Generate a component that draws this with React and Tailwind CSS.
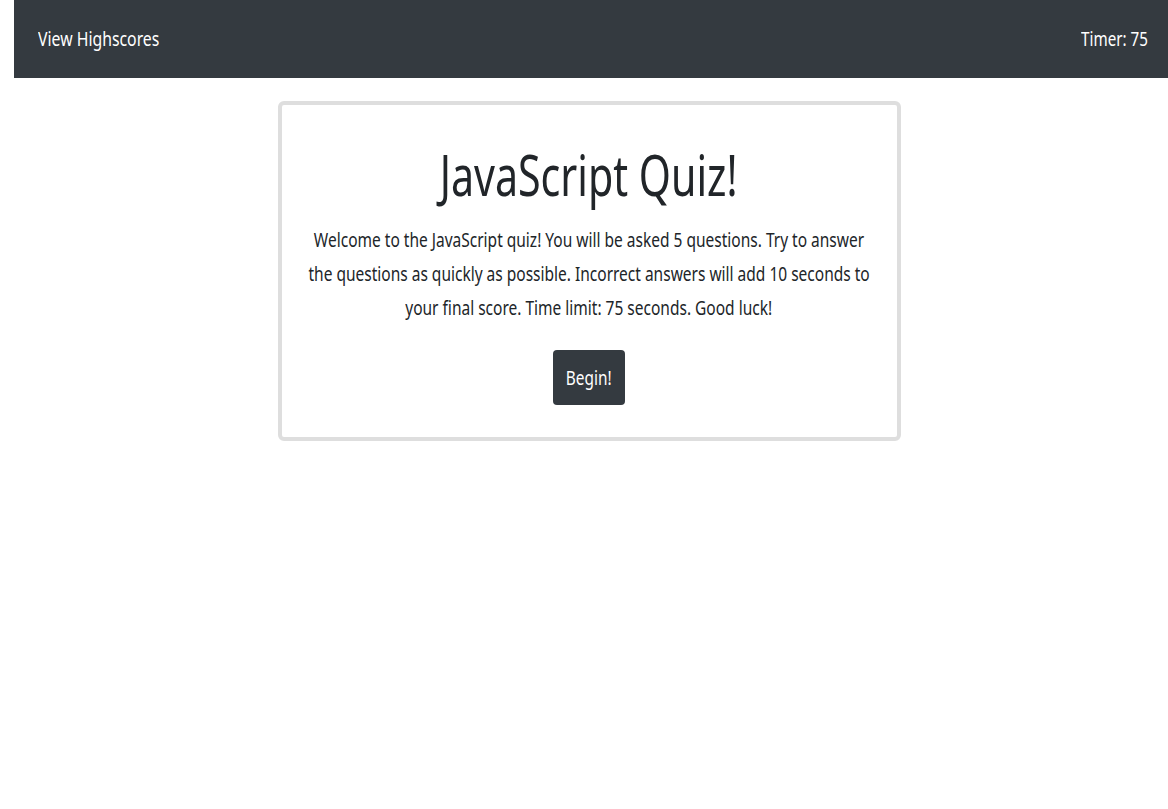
import React from "react";

// The screenshot's type is horizontally condensed; no condensed face is installed,
// so lines are squeezed with scale-x.
function Line({ children, className = "" }) {
  return <span className={`inline-block whitespace-nowrap ${className}`}>{children}</span>;
}

export default function App() {
  return (
    <div
      className="min-h-screen bg-white text-[#212529] pl-[14px]"
      style={{ fontFamily: '"Noto Sans", "Open Sans", sans-serif' }}
    >
      {/* Navbar */}
      <nav className="h-[78px] bg-[#343a40] flex items-center justify-between pl-6 pr-5 text-white text-[20px]">
        <a href="#" className="text-white">
          <Line className="origin-left scale-x-[0.79]">View Highscores</Line>
        </a>
        <Line className="origin-right scale-x-[0.76]">Timer: 75</Line>
      </nav>

      {/* Quiz card */}
      <div className="w-[623px] mx-auto -translate-x-[2px] mt-[23px] border-4 border-[#dedede] rounded-md px-6 pt-[36px] pb-[32px] text-center">
        <h1 className="text-[56px] leading-[67px] font-normal">
          <Line className="scale-x-[0.735]">JavaScript Quiz!</Line>
        </h1>
        <p className="mt-[15px] text-[20px] leading-[34px] flex flex-col items-center">
          <Line className="scale-x-[0.775]">
            Welcome to the JavaScript quiz! You will be asked 5 questions. Try to answer
          </Line>
          <Line className="scale-x-[0.775]">
            the questions as quickly as possible. Incorrect answers will add 10 seconds to
          </Line>
          <Line className="scale-x-[0.775]">your final score. Time limit: 75 seconds. Good luck!</Line>
        </p>
        <button className="mt-[25px] w-[72px] h-[55px] bg-[#343a40] text-white text-[20px] rounded">
          <Line className="scale-x-[0.77]">Begin!</Line>
        </button>
      </div>
    </div>
  );
}
